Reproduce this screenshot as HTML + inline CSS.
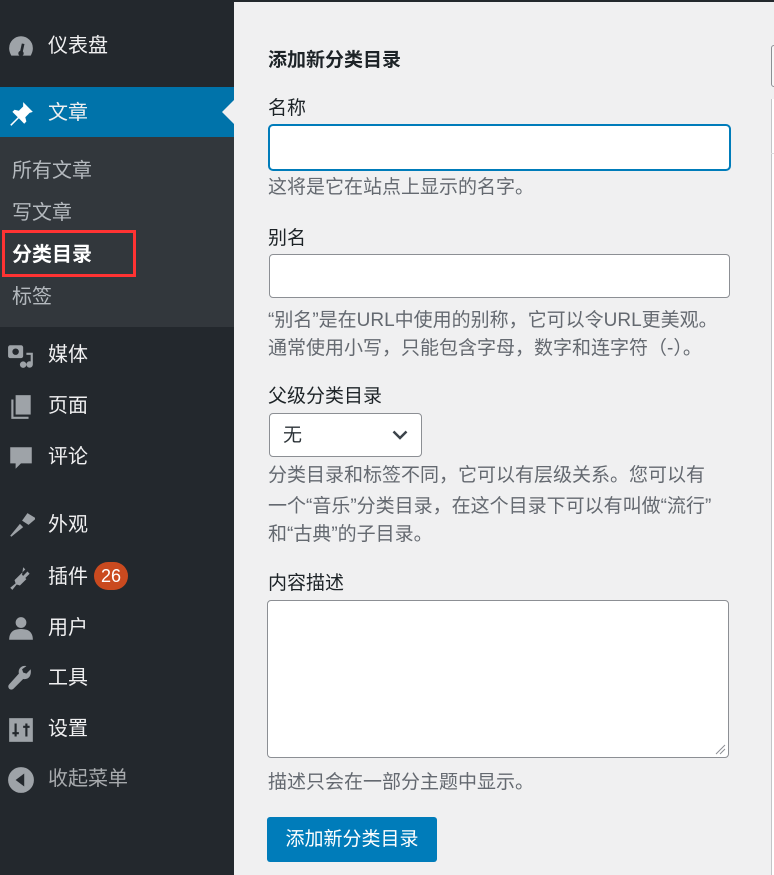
<!DOCTYPE html>
<html style="overflow:hidden;height:875px"><head><meta charset="utf-8"><style>
*{margin:0;padding:0;box-sizing:border-box}
body{width:774px;height:875px;overflow:hidden;background:#f0f0f1;font-family:"Liberation Sans","Noto Sans CJK SC",sans-serif;position:relative}
#side{position:absolute;left:0;top:0;width:234px;height:875px;background:#23282d}
.it{position:absolute;left:0;width:234px;height:40px;color:#f0f0f1;font-size:20px;line-height:40px;padding-left:48px}
.ic{position:absolute;left:7px;top:7px;width:28px;height:28px}
.sub{position:absolute;left:12px;color:#b4b9be;font-size:20px;line-height:26px}
.t{position:absolute;left:268px;font-size:19px;line-height:26px;color:#1d2327}
.d{color:#646970}
.box{position:absolute;background:#fff;border:1px solid #8c8f94;border-radius:4px}
</style></head><body>
<div style="position:absolute;left:0;top:0;width:774px;height:2px;background:#23282d"></div>
<div id="side">
 <div class="it" style="top:26px"><svg class="ic" viewBox="0 0 26 26"><path d="M13 3a11 11 0 0 0-11 11c0 3 1 5 2 7h18c1-2 2-4 2-7A11 11 0 0 0 13 3z" fill="#9ea3a8"/><path d="M13 19l2-9" stroke="#23282d" stroke-width="2.5"/><circle cx="13" cy="19" r="2.5" fill="#23282d"/></svg>仪表盘</div>
 <div style="position:absolute;top:87px;left:0;width:234px;height:50px;background:#0073aa"></div>
 <div style="position:absolute;left:222px;top:100px;width:0;height:0;border-top:12px solid transparent;border-bottom:12px solid transparent;border-right:12px solid #f0f0f1"></div>
 <div class="it" style="top:93px"><svg class="ic" viewBox="0 0 26 26"><path d="M15 2l9 9-3 1-4 4 1 4-2 2-5-5-7 7-1-1 7-7-5-5 2-2 4 1 4-4z" fill="#fff"/></svg>文章</div>
 <div style="position:absolute;top:137px;left:0;width:234px;height:190px;background:#32373c"></div>
 <div class="sub" style="top:158px">所有文章</div>
 <div class="sub" style="top:200px">写文章</div>
 <div style="position:absolute;left:2px;top:230px;width:134px;height:47px;border:3px solid #f33"></div>
 <div class="sub" style="top:242px;color:#fff;font-weight:bold">分类目录</div>
 <div class="sub" style="top:284px">标签</div>
 <div class="it" style="top:335px"><svg class="ic" viewBox="0 0 26 26"><rect x="1" y="3" width="14" height="12" rx="2" fill="#9ea3a8"/><circle cx="8" cy="9" r="3" fill="#23282d"/><path d="M18 10h6v11a3 3 0 1 1-2-3v-6h-4z" fill="#9ea3a8"/><circle cx="15" cy="21" r="3" fill="#9ea3a8"/></svg>媒体</div>
 <div class="it" style="top:386px"><svg class="ic" viewBox="0 0 26 26"><rect x="8" y="2" width="14" height="18" fill="#9ea3a8"/><path d="M4 6h2v16h14v2H4z" fill="#9ea3a8"/></svg>页面</div>
 <div class="it" style="top:437px"><svg class="ic" viewBox="0 0 26 26"><path d="M3 3h20v15H13l-5 5v-5H3z" fill="#9ea3a8"/></svg>评论</div>
 <div class="it" style="top:505px"><svg class="ic" viewBox="0 0 26 26"><path d="M14 8l5-7 8 5-7 6z" fill="#9ea3a8"/><path d="M3 22l9-11 3 3-11 9z" fill="#9ea3a8"/></svg>外观</div>
 <div class="it" style="top:557px"><svg class="ic" viewBox="0 0 26 26"><path d="M15 3l2 2-4 4 2 2 4-4 2 2-4 4 1 1-6 6-3-1-4 5-2-2 5-4-1-3 6-6 1 1z" fill="#9ea3a8"/></svg>插件<span style="display:inline-block;margin-left:6px;width:34px;height:28px;border-radius:14px;background:#ca4a1f;color:#fff;font-size:18px;line-height:28px;text-align:center;vertical-align:1px">26</span></div>
 <div class="it" style="top:608px"><svg class="ic" viewBox="0 0 26 26"><circle cx="13" cy="7" r="5" fill="#9ea3a8"/><path d="M2 23c0-8 5-10 11-10s11 2 11 10z" fill="#9ea3a8"/></svg>用户</div>
 <div class="it" style="top:658px"><svg class="ic" viewBox="0 0 26 26"><path d="M22 4l-4 4-3-1-1-3 4-3c-4-1-8 2-7 7L2 18a2.5 2.5 0 0 0 4 4l9-9c5 1 8-3 7-9z" fill="#9ea3a8"/></svg>工具</div>
 <div class="it" style="top:709px"><svg class="ic" viewBox="0 0 26 26"><rect x="2" y="2" width="22" height="22" fill="#9ea3a8"/><path d="M8 7v12M5 16h6M18 7v12M15 10h6" stroke="#23282d" stroke-width="2"/></svg>设置</div>
 <div class="it" style="top:759px;color:#a7aaad"><svg class="ic" viewBox="0 0 26 26"><circle cx="13" cy="13" r="12" fill="#9ea3a8"/><path d="M16 7v12l-8-6z" fill="#23282d"/></svg>收起菜单</div>
</div>
<div style="position:absolute;left:771px;top:45px;width:6px;height:42px;border:1px solid #8c8f94;border-radius:3px;background:#f6f7f7"></div>
<div style="position:absolute;left:771px;top:99px;width:3px;height:776px;border-left:1px solid #c3c4c7;background:#fff"></div>
<div style="position:absolute;left:771px;top:153px;width:3px;border-top:1px solid #dcdcde"></div>

<div class="t" style="top:48px;font-weight:bold">添加新分类目录</div>
<div class="t" style="top:96px">名称</div>
<div class="box" style="left:268px;top:124px;width:463px;height:47px;border:2px solid #007cba;border-radius:5px"></div>
<div class="t d" style="top:175px">这将是它在站点上显示的名字。</div>
<div class="t" style="top:226px">别名</div>
<div class="box" style="left:269px;top:254px;width:461px;height:44px"></div>
<div class="t d" style="top:308px">“别名”是在URL中使用的别称，它可以令URL更美观。</div>
<div class="t d" style="top:336px">通常使用小写，只能包含字母，数字和连字符（-）。</div>
<div class="t" style="top:384px">父级分类目录</div>
<div class="box" style="left:269px;top:413px;width:153px;height:44px;padding-left:13px;font-size:19px;line-height:44px;color:#2c3338">无<svg style="position:absolute;right:13px;top:16px" width="16" height="10" viewBox="0 0 16 10"><path d="M1.5 1.5l6.5 6.5 6.5-6.5" stroke="#3c434a" stroke-width="2.5" fill="none"/></svg></div>
<div class="t d" style="top:463px">分类目录和标签不同，它可以有层级关系。您可以有</div>
<div class="t d" style="top:494px">一个“音乐”分类目录，在这个目录下可以有叫做“流行”</div>
<div class="t d" style="top:522px">和“古典”的子目录。</div>
<div class="t" style="top:571px">内容描述</div>
<div class="box" style="left:267px;top:600px;width:462px;height:158px"><svg style="position:absolute;right:2px;bottom:2px" width="12" height="12"><path d="M11 2L2 11M11 6L6 11" stroke="#8c8f94" stroke-width="1"/></svg></div>
<div class="t d" style="top:770px">描述只会在一部分主题中显示。</div>
<div style="position:absolute;left:267px;top:817px;width:170px;height:45px;background:#007cba;border-radius:3px;color:#fff;font-size:19px;line-height:45px;text-align:center">添加新分类目录</div>
</body></html>
